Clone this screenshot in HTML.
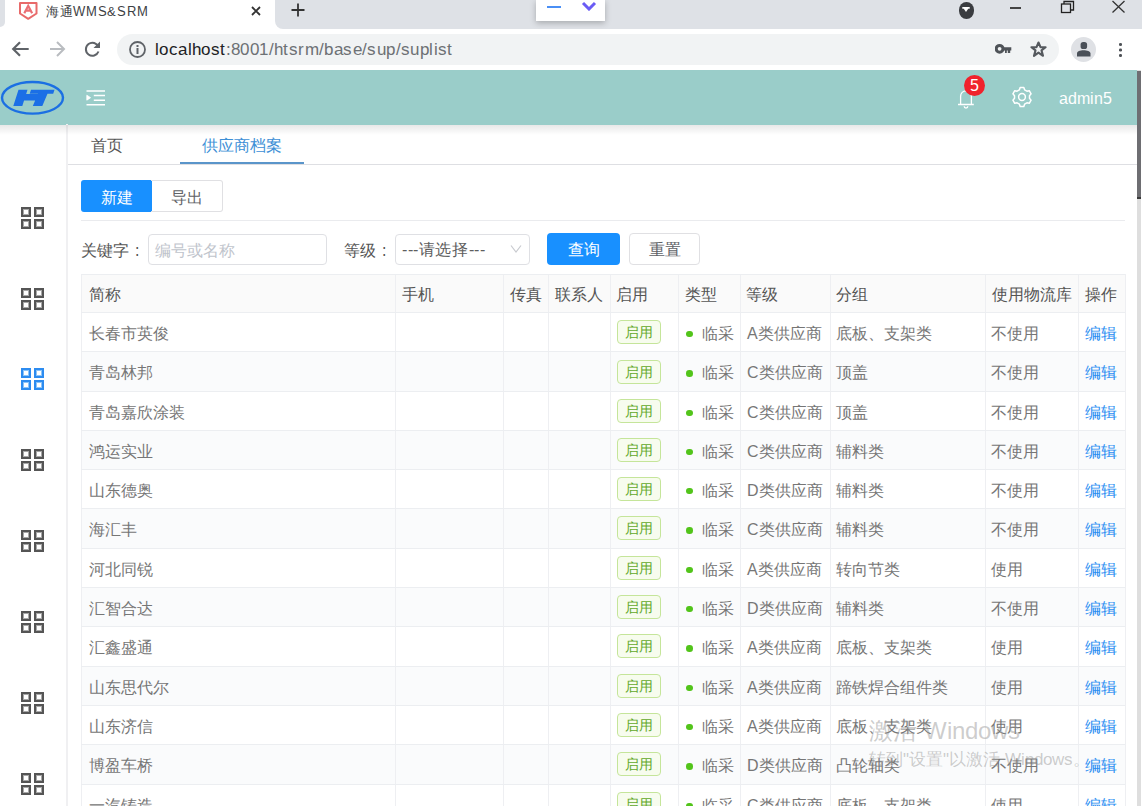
<!DOCTYPE html>
<html><head><meta charset="utf-8">
<style>
@font-face{font-family:"Liberation Sans";src:local("Liberation Sans"),local("LiberationSans"),local("LiberationSans-Regular")}
@font-face{font-family:"Liberation Sans";src:local("Liberation Mono"),local("LiberationMono"),local("LiberationMono-Regular");size-adjust:180%;unicode-range:U+2E80-9FFF,U+3000-303F,U+FF00-FFEF}
*{margin:0;padding:0;box-sizing:border-box}
html,body{width:1142px;height:807px;overflow:hidden;background:#fff;font-family:"Liberation Sans",sans-serif;position:relative}
.a{position:absolute}
.t{white-space:nowrap}
#tabbar{left:275px;top:0;width:867px;height:29px;background:#dee1e6;border-radius:0 0 0 8px}
#tab{left:0;top:0;width:275px;height:29px;background:#fff}
#toolbar{left:0;top:29px;width:1142px;height:41px;background:#fff}
#omni{left:117px;top:34px;width:942px;height:31px;background:#f1f3f4;border-radius:16px}
#hdr{left:0;top:70px;width:1137px;height:54.6px;background:#9acdc9}
#hshadow{z-index:2;left:0;top:124.6px;width:1137px;height:10px;background:linear-gradient(rgba(0,0,0,.09),rgba(0,0,0,0))}
#side{left:66px;top:124px;width:2px;height:683px;background:#f0f0f2}
#scroll{left:1137px;top:70px;width:4px;height:737px;background:#dedede}
#thumb{left:1137px;top:71px;width:4px;height:128px;background:#6e6e72;border-bottom:2px solid #3a3a3a}
.sq{border:2.5px solid #616161;width:10px;height:10px}
.grid{width:23px;height:23px}
.grid i{position:absolute;width:10px;height:10px;border:2px solid #555;box-shadow:inset 0 0 0 1px #a8a8a8}
.grid.on i{border-color:#2d8cf0;box-shadow:inset 0 0 0 1px #8cc4f8}
.thead{background:#fafafa}
.th{font-size:15.5px;color:#555}
.tr{left:81px;width:1044px}
.td{font-size:15.5px;color:#767676}
.edit{color:#2a8ef2}
.tag{width:44px;height:24px;border:1px solid #c5e59a;background:#f7fcee;border-radius:4px;color:#62a82a;font-size:14px;line-height:22px;text-align:center}
.dot{width:6.5px;height:6.5px;border-radius:50%;background:#52c41a}
.vl{width:1px;background:#eeeff2}
.hl{left:81px;width:1044px;height:1px;background:#eceef1}
.btn{font-size:16px;text-align:center}
</style></head><body>
<div id="tabbar" class="a"></div>
<div id="tab" class="a"></div>
<div class="a" style="left:0;top:0;width:5px;height:27px;background:#dee1e6;border-radius:0 0 6px 0"></div>
<!-- favicon -->
<svg class="a" style="left:14px;top:0" width="30" height="26" viewBox="0 0 30 26"><path d="M6 3H22.5V13.5L14.2 18.8L6 13.5Z" fill="none" stroke="#e86a6a" stroke-width="2" stroke-linejoin="round"/><path d="M10.3 13.2L14.2 5.8L18.1 13.2M11.6 10.6H16.8" fill="none" stroke="#ea6e74" stroke-width="2.2"/></svg>
<div class="a t" style="left:46px;top:3px;font-size:13px;letter-spacing:0.7px;color:#3c4043;line-height:18px">海通WMS&amp;SRM</div>
<svg class="a" style="left:251px;top:6px" width="10" height="10" viewBox="0 0 10 10"><path d="M1 1L9 9M9 1L1 9" stroke="#333" stroke-width="1.8"/></svg>
<svg class="a" style="left:291px;top:3px" width="14" height="14" viewBox="0 0 14 14"><path d="M7 0.5V13.5M0.5 7H13.5" stroke="#333" stroke-width="1.8"/></svg>
<!-- popup -->
<div class="a" style="left:536px;top:0;width:69px;height:21px;background:#fff;box-shadow:0 2px 6px rgba(0,0,0,.25)"></div>
<div class="a" style="left:547px;top:6px;width:14px;height:2px;background:#4a8ff5"></div>
<svg class="a" style="left:581px;top:1px" width="16" height="10" viewBox="0 0 16 10"><path d="M2 2L8 8L14 2" fill="none" stroke="#6a5cf5" stroke-width="3"/></svg>
<!-- window icons -->
<div class="a" style="left:958.5px;top:2px;width:15.5px;height:16.5px;border-radius:50%;background:#3a3c40"></div><svg class="a" style="left:962px;top:6px" width="8" height="7" viewBox="0 0 8 7"><path d="M0.3 1H7.7V2.8H0.3Z M1.8 2.8H6.2L4 6Z" fill="#fff"/></svg>
<div class="a" style="left:1010px;top:7px;width:11px;height:1.5px;background:#444"></div>
<svg class="a" style="left:1060px;top:0" width="16" height="14" viewBox="0 0 16 14"><rect x="1.5" y="4" width="9" height="8.5" fill="none" stroke="#222" stroke-width="1.3"/><path d="M4 4V1.5H13.5V10H10.5" fill="none" stroke="#222" stroke-width="1.3"/></svg>
<svg class="a" style="left:1111px;top:0" width="15" height="14" viewBox="0 0 15 14"><path d="M1.5 1L13.5 12.5M13.5 1L1.5 12.5" stroke="#333" stroke-width="1.3"/></svg>
<!-- toolbar -->
<div id="toolbar" class="a"></div>
<div id="omni" class="a"></div>
<svg class="a" style="left:10px;top:39px" width="20" height="20" viewBox="0 0 20 20"><path d="M18.7 10H3.5M10 3.2L3.2 10L10 16.8" fill="none" stroke="#5f6368" stroke-width="2.2"/></svg>
<svg class="a" style="left:47px;top:39px" width="20" height="20" viewBox="0 0 20 20"><path d="M3 10H16.5M10 3L17 10L10 17" fill="none" stroke="#b9bcc0" stroke-width="2"/></svg>
<svg class="a" style="left:83px;top:39px" width="20" height="20" viewBox="0 0 20 20"><path d="M15.5 8A6.5 6.5 0 1 0 15.5 12.5" fill="none" stroke="#5f6368" stroke-width="2"/><path d="M17 2.5V9H10.5Z" fill="#5f6368"/></svg>
<svg class="a" style="left:128px;top:40px" width="19" height="19" viewBox="0 0 19 19"><circle cx="9.5" cy="9.5" r="7.5" fill="none" stroke="#5f6368" stroke-width="1.8"/><rect x="8.5" y="8" width="2" height="6" fill="#5f6368"/><rect x="8.5" y="5" width="2" height="2" fill="#5f6368"/></svg>
<div class="a t" style="left:155px;top:39px;font-size:16.5px;line-height:20px;letter-spacing:0.4px;color:#6d7175"><span style="color:#202124">localhost</span>:8001/htsrm/base/sup/suplist</div>
<svg class="a" style="left:995px;top:43px" width="17" height="12" viewBox="0 0 17 12"><circle cx="4.6" cy="5.8" r="3.4" fill="none" stroke="#4f5358" stroke-width="3"/><path d="M7.5 4.2H16.3V7.6H15.2V10H12.8V7.6H11.8V10H10V7.6H7.5Z" fill="#4f5358"/></svg>
<svg class="a" style="left:1029px;top:40px" width="19" height="19" viewBox="0 0 19 19"><path d="M9.5 2.5L11.5 7.2H16.6L12.5 10.4L14 15.8L9.5 12.6L5 15.8L6.5 10.4L2.4 7.2H7.5Z" fill="none" stroke="#55595e" stroke-width="2.1" stroke-linejoin="round"/></svg>
<div class="a" style="left:1071px;top:37px;width:25px;height:25px;border-radius:50%;background:#dfe1e5"></div>
<svg class="a" style="left:1073px;top:39px" width="21" height="21" viewBox="0 0 21 21"><rect x="7.6" y="3" width="6.5" height="7" rx="2.6" fill="#4a5058"/><path d="M4 17.5V14.5C4 12.3 7 11.3 10.5 11.3S17.5 12.3 17.5 14.5V17.5Z" fill="#4a5058"/></svg>
<div class="a" style="left:1119px;top:43.3px;width:2.6px;height:2.6px;border-radius:50%;background:#4f5358;box-shadow:0 5.5px 0 #4f5358,0 11px 0 #4f5358"></div>
<!-- app header -->
<div id="hdr" class="a"></div>
<div id="hshadow" class="a"></div>
<svg class="a" style="left:0;top:80px" width="66" height="36" viewBox="0 0 66 36"><ellipse cx="32.5" cy="17.8" rx="30.5" ry="15.8" fill="none" stroke="#1b6fe3" stroke-width="2.4"/><path d="M18.5 9.8L27.5 9.8L22.3 26L13.3 26Z M25.5 14L39 14L37 20.5L23.5 20.5Z M31 9.8L54.5 9.8L53.2 13.8L29.7 13.8Z M38 13.8L47.5 13.8L42.3 26L32.8 26Z" fill="#1b6fe6"/></svg>
<svg class="a" style="left:86px;top:90px" width="19" height="16" viewBox="0 0 19 16"><path d="M0.5 1H19M7.8 5.5H19M7.8 10.2H19M0.5 14.8H19" stroke="#fff" stroke-width="1.5"/><path d="M0.8 5.2L4.6 7.7L0.8 10.2Z" fill="#fff" stroke="#fff" stroke-width="0.8" stroke-linejoin="round"/></svg>
<svg class="a" style="left:957px;top:89px" width="18" height="20" viewBox="0 0 18 20"><path d="M3.6 15.5V7.2A5.4 5.4 0 0 1 14.4 7.2V15.5M1 15.5H16.8M7.2 17.3A1.8 1.8 0 0 0 10.8 17.3" fill="none" stroke="#fff" stroke-width="1.3"/></svg>
<div class="a" style="left:963.5px;top:74.5px;width:21.5px;height:21.5px;border-radius:50%;background:#f0222c;color:#fff;font-size:16px;line-height:22px;text-align:center">5</div>
<svg class="a" style="left:1010px;top:85px" width="24" height="24" viewBox="0 0 24 24"><path d="M9.40 4.86 L10.17 2.58 L13.83 2.58 L14.60 4.86 L16.89 6.18 L19.25 5.70 L21.08 8.87 L19.48 10.68 L19.48 13.32 L21.08 15.13 L19.25 18.30 L16.89 17.82 L14.60 19.14 L13.83 21.42 L10.17 21.42 L9.40 19.14 L7.11 17.82 L4.75 18.30 L2.92 15.13 L4.52 13.32 L4.52 10.68 L2.92 8.87 L4.75 5.70 L7.11 6.18Z" fill="none" stroke="#fff" stroke-width="1.5" stroke-linejoin="round"/><circle cx="12" cy="12" r="3.4" fill="none" stroke="#fff" stroke-width="1.5"/></svg>
<div class="a t" style="left:1059px;top:89px;font-size:16px;line-height:20px;color:#fff">admin5</div>
<div id="scroll" class="a"></div>
<div id="thumb" class="a"></div>
<!-- sidebar -->
<div id="side" class="a"></div>
<div class="a grid" style="left:21px;top:207px"><i style="left:0;top:0"></i><i style="left:13px;top:0"></i><i style="left:0;top:12px"></i><i style="left:13px;top:12px"></i></div>
<div class="a grid" style="left:21px;top:288px"><i style="left:0;top:0"></i><i style="left:13px;top:0"></i><i style="left:0;top:12px"></i><i style="left:13px;top:12px"></i></div>
<div class="a grid on" style="left:21px;top:368px"><i style="left:0;top:0"></i><i style="left:13px;top:0"></i><i style="left:0;top:12px"></i><i style="left:13px;top:12px"></i></div>
<div class="a grid" style="left:21px;top:449px"><i style="left:0;top:0"></i><i style="left:13px;top:0"></i><i style="left:0;top:12px"></i><i style="left:13px;top:12px"></i></div>
<div class="a grid" style="left:21px;top:530px"><i style="left:0;top:0"></i><i style="left:13px;top:0"></i><i style="left:0;top:12px"></i><i style="left:13px;top:12px"></i></div>
<div class="a grid" style="left:21px;top:611px"><i style="left:0;top:0"></i><i style="left:13px;top:0"></i><i style="left:0;top:12px"></i><i style="left:13px;top:12px"></i></div>
<div class="a grid" style="left:21px;top:692px"><i style="left:0;top:0"></i><i style="left:13px;top:0"></i><i style="left:0;top:12px"></i><i style="left:13px;top:12px"></i></div>
<div class="a grid" style="left:21px;top:772.5px"><i style="left:0;top:0"></i><i style="left:13px;top:0"></i><i style="left:0;top:12px"></i><i style="left:13px;top:12px"></i></div>
<!-- tabs -->
<div class="a" style="left:68px;top:164px;width:1069px;height:1px;background:#dedfe3"></div>
<div class="a t" style="left:91px;top:136px;font-size:15.5px;line-height:20px;color:#555">首页</div>
<div class="a t" style="left:202px;top:136px;font-size:15.5px;line-height:20px;color:#3d8fd6">供应商档案</div>
<div class="a" style="left:180px;top:162px;width:124px;height:2px;background:#5a95ca"></div>
<!-- buttons -->
<div class="a btn t" style="left:81px;top:180px;width:71px;height:32px;line-height:36px;background:#1890ff;color:#fff;border-radius:3px 0 0 3px">新建</div>
<div class="a btn t" style="left:151px;top:180px;width:72px;height:32px;line-height:34px;border:1px solid #e0e0e3;border-left:none;color:#606266;border-radius:0 3px 3px 0">导出</div>
<div class="a" style="left:81px;top:220px;width:1044px;height:1px;background:#eaebee"></div>
<!-- search -->
<div class="a t" style="left:81px;top:240.5px;font-size:15.5px;line-height:20px;color:#555">关键字<span style="margin-left:5.5px">:</span></div>
<div class="a" style="left:148px;top:234px;width:179px;height:31px;border:1px solid #dfe0e4;border-radius:4px"></div>
<div class="a t" style="left:155px;top:240.5px;font-size:15.5px;line-height:20px;color:#c0c4cc">编号或名称</div>
<div class="a t" style="left:344px;top:240.5px;font-size:15.5px;line-height:20px;color:#555">等级<span style="margin-left:5.5px">:</span></div>
<div class="a" style="left:395px;top:234px;width:135px;height:31px;border:1px solid #dfe0e4;border-radius:4px"></div>
<div class="a t" style="left:402px;top:239.5px;font-size:15.5px;line-height:20px;letter-spacing:0.6px;color:#5e5e5e">---请选择---</div>
<svg class="a" style="left:510px;top:244px" width="12" height="10" viewBox="0 0 12 10"><path d="M1 1.5L6 8L11 1.5" fill="none" stroke="#c8cacf" stroke-width="1.2"/></svg>
<div class="a btn t" style="left:547px;top:233px;width:73px;height:32px;line-height:34px;background:#1890ff;color:#fff;border-radius:4px">查询</div>
<div class="a btn t" style="left:629px;top:233px;width:71px;height:32px;line-height:32px;border:1px solid #e0e0e3;color:#606266;border-radius:4px">重置</div>
<div class="a thead" style="left:81px;top:274px;width:1044px;height:38px"></div>
<div class="a th t" style="left:89px;top:276px;height:38px;line-height:38px">简称</div>
<div class="a th t" style="left:402px;top:276px;height:38px;line-height:38px">手机</div>
<div class="a th t" style="left:510px;top:276px;height:38px;line-height:38px">传真</div>
<div class="a th t" style="left:555px;top:276px;height:38px;line-height:38px">联系人</div>
<div class="a th t" style="left:616px;top:276px;height:38px;line-height:38px">启用</div>
<div class="a th t" style="left:685px;top:276px;height:38px;line-height:38px">类型</div>
<div class="a th t" style="left:746px;top:276px;height:38px;line-height:38px">等级</div>
<div class="a th t" style="left:836px;top:276px;height:38px;line-height:38px">分组</div>
<div class="a th t" style="left:992px;top:276px;height:38px;line-height:38px">使用物流库</div>
<div class="a th t" style="left:1085px;top:276px;height:38px;line-height:38px">操作</div>
<div class="a tr" style="top:312px;height:39px;background:#fff"></div>
<div class="a td t" style="left:89px;top:314px;height:39px;line-height:39px">长春市英俊</div>
<div class="a tag" style="left:617px;top:320px">启用</div>
<div class="a dot" style="left:686px;top:330.8px"></div>
<div class="a td t" style="left:702px;top:314px;height:39px;line-height:39px">临采</div>
<div class="a td t" style="left:747px;top:314px;height:39px;line-height:39px">A类供应商</div>
<div class="a td t" style="left:836px;top:314px;height:39px;line-height:39px">底板、支架类</div>
<div class="a td t" style="left:991px;top:314px;height:39px;line-height:39px">不使用</div>
<div class="a td edit t" style="left:1085px;top:314px;height:39px;line-height:39px">编辑</div>
<div class="a tr" style="top:351px;height:40px;background:#fafbfc"></div>
<div class="a td t" style="left:89px;top:353px;height:40px;line-height:40px">青岛林邦</div>
<div class="a tag" style="left:617px;top:360px">启用</div>
<div class="a dot" style="left:686px;top:370.3px"></div>
<div class="a td t" style="left:702px;top:353px;height:40px;line-height:40px">临采</div>
<div class="a td t" style="left:747px;top:353px;height:40px;line-height:40px">C类供应商</div>
<div class="a td t" style="left:836px;top:353px;height:40px;line-height:40px">顶盖</div>
<div class="a td t" style="left:991px;top:353px;height:40px;line-height:40px">不使用</div>
<div class="a td edit t" style="left:1085px;top:353px;height:40px;line-height:40px">编辑</div>
<div class="a tr" style="top:391px;height:39px;background:#fff"></div>
<div class="a td t" style="left:89px;top:393px;height:39px;line-height:39px">青岛嘉欣涂装</div>
<div class="a tag" style="left:617px;top:399px">启用</div>
<div class="a dot" style="left:686px;top:409.8px"></div>
<div class="a td t" style="left:702px;top:393px;height:39px;line-height:39px">临采</div>
<div class="a td t" style="left:747px;top:393px;height:39px;line-height:39px">C类供应商</div>
<div class="a td t" style="left:836px;top:393px;height:39px;line-height:39px">顶盖</div>
<div class="a td t" style="left:991px;top:393px;height:39px;line-height:39px">不使用</div>
<div class="a td edit t" style="left:1085px;top:393px;height:39px;line-height:39px">编辑</div>
<div class="a tr" style="top:430px;height:39px;background:#fafbfc"></div>
<div class="a td t" style="left:89px;top:432px;height:39px;line-height:39px">鸿运实业</div>
<div class="a tag" style="left:617px;top:438px">启用</div>
<div class="a dot" style="left:686px;top:448.8px"></div>
<div class="a td t" style="left:702px;top:432px;height:39px;line-height:39px">临采</div>
<div class="a td t" style="left:747px;top:432px;height:39px;line-height:39px">C类供应商</div>
<div class="a td t" style="left:836px;top:432px;height:39px;line-height:39px">辅料类</div>
<div class="a td t" style="left:991px;top:432px;height:39px;line-height:39px">不使用</div>
<div class="a td edit t" style="left:1085px;top:432px;height:39px;line-height:39px">编辑</div>
<div class="a tr" style="top:469px;height:39px;background:#fff"></div>
<div class="a td t" style="left:89px;top:471px;height:39px;line-height:39px">山东德奥</div>
<div class="a tag" style="left:617px;top:477px">启用</div>
<div class="a dot" style="left:686px;top:487.8px"></div>
<div class="a td t" style="left:702px;top:471px;height:39px;line-height:39px">临采</div>
<div class="a td t" style="left:747px;top:471px;height:39px;line-height:39px">D类供应商</div>
<div class="a td t" style="left:836px;top:471px;height:39px;line-height:39px">辅料类</div>
<div class="a td t" style="left:991px;top:471px;height:39px;line-height:39px">不使用</div>
<div class="a td edit t" style="left:1085px;top:471px;height:39px;line-height:39px">编辑</div>
<div class="a tr" style="top:508px;height:40px;background:#fafbfc"></div>
<div class="a td t" style="left:89px;top:510px;height:40px;line-height:40px">海汇丰</div>
<div class="a tag" style="left:617px;top:516px">启用</div>
<div class="a dot" style="left:686px;top:527.3px"></div>
<div class="a td t" style="left:702px;top:510px;height:40px;line-height:40px">临采</div>
<div class="a td t" style="left:747px;top:510px;height:40px;line-height:40px">C类供应商</div>
<div class="a td t" style="left:836px;top:510px;height:40px;line-height:40px">辅料类</div>
<div class="a td t" style="left:991px;top:510px;height:40px;line-height:40px">不使用</div>
<div class="a td edit t" style="left:1085px;top:510px;height:40px;line-height:40px">编辑</div>
<div class="a tr" style="top:548px;height:39px;background:#fff"></div>
<div class="a td t" style="left:89px;top:550px;height:39px;line-height:39px">河北同锐</div>
<div class="a tag" style="left:617px;top:556px">启用</div>
<div class="a dot" style="left:686px;top:566.8px"></div>
<div class="a td t" style="left:702px;top:550px;height:39px;line-height:39px">临采</div>
<div class="a td t" style="left:747px;top:550px;height:39px;line-height:39px">A类供应商</div>
<div class="a td t" style="left:836px;top:550px;height:39px;line-height:39px">转向节类</div>
<div class="a td t" style="left:991px;top:550px;height:39px;line-height:39px">使用</div>
<div class="a td edit t" style="left:1085px;top:550px;height:39px;line-height:39px">编辑</div>
<div class="a tr" style="top:587px;height:39px;background:#fafbfc"></div>
<div class="a td t" style="left:89px;top:589px;height:39px;line-height:39px">汇智合达</div>
<div class="a tag" style="left:617px;top:595px">启用</div>
<div class="a dot" style="left:686px;top:605.8px"></div>
<div class="a td t" style="left:702px;top:589px;height:39px;line-height:39px">临采</div>
<div class="a td t" style="left:747px;top:589px;height:39px;line-height:39px">D类供应商</div>
<div class="a td t" style="left:836px;top:589px;height:39px;line-height:39px">辅料类</div>
<div class="a td t" style="left:991px;top:589px;height:39px;line-height:39px">不使用</div>
<div class="a td edit t" style="left:1085px;top:589px;height:39px;line-height:39px">编辑</div>
<div class="a tr" style="top:626px;height:40px;background:#fff"></div>
<div class="a td t" style="left:89px;top:628px;height:40px;line-height:40px">汇鑫盛通</div>
<div class="a tag" style="left:617px;top:634px">启用</div>
<div class="a dot" style="left:686px;top:645.3px"></div>
<div class="a td t" style="left:702px;top:628px;height:40px;line-height:40px">临采</div>
<div class="a td t" style="left:747px;top:628px;height:40px;line-height:40px">A类供应商</div>
<div class="a td t" style="left:836px;top:628px;height:40px;line-height:40px">底板、支架类</div>
<div class="a td t" style="left:991px;top:628px;height:40px;line-height:40px">使用</div>
<div class="a td edit t" style="left:1085px;top:628px;height:40px;line-height:40px">编辑</div>
<div class="a tr" style="top:666px;height:39px;background:#fafbfc"></div>
<div class="a td t" style="left:89px;top:668px;height:39px;line-height:39px">山东思代尔</div>
<div class="a tag" style="left:617px;top:674px">启用</div>
<div class="a dot" style="left:686px;top:684.8px"></div>
<div class="a td t" style="left:702px;top:668px;height:39px;line-height:39px">临采</div>
<div class="a td t" style="left:747px;top:668px;height:39px;line-height:39px">A类供应商</div>
<div class="a td t" style="left:836px;top:668px;height:39px;line-height:39px">蹄铁焊合组件类</div>
<div class="a td t" style="left:991px;top:668px;height:39px;line-height:39px">使用</div>
<div class="a td edit t" style="left:1085px;top:668px;height:39px;line-height:39px">编辑</div>
<div class="a tr" style="top:705px;height:39px;background:#fff"></div>
<div class="a td t" style="left:89px;top:707px;height:39px;line-height:39px">山东济信</div>
<div class="a tag" style="left:617px;top:713px">启用</div>
<div class="a dot" style="left:686px;top:723.8px"></div>
<div class="a td t" style="left:702px;top:707px;height:39px;line-height:39px">临采</div>
<div class="a td t" style="left:747px;top:707px;height:39px;line-height:39px">A类供应商</div>
<div class="a td t" style="left:836px;top:707px;height:39px;line-height:39px">底板、支架类</div>
<div class="a td t" style="left:991px;top:707px;height:39px;line-height:39px">使用</div>
<div class="a td edit t" style="left:1085px;top:707px;height:39px;line-height:39px">编辑</div>
<div class="a tr" style="top:744px;height:40px;background:#fafbfc"></div>
<div class="a td t" style="left:89px;top:746px;height:40px;line-height:40px">博盈车桥</div>
<div class="a tag" style="left:617px;top:752px">启用</div>
<div class="a dot" style="left:686px;top:763.3px"></div>
<div class="a td t" style="left:702px;top:746px;height:40px;line-height:40px">临采</div>
<div class="a td t" style="left:747px;top:746px;height:40px;line-height:40px">D类供应商</div>
<div class="a td t" style="left:836px;top:746px;height:40px;line-height:40px">凸轮轴类</div>
<div class="a td t" style="left:991px;top:746px;height:40px;line-height:40px">不使用</div>
<div class="a td edit t" style="left:1085px;top:746px;height:40px;line-height:40px">编辑</div>
<div class="a tr" style="top:784px;height:39px;background:#fff"></div>
<div class="a td t" style="left:89px;top:786px;height:39px;line-height:39px">一汽铸造</div>
<div class="a tag" style="left:617px;top:792px">启用</div>
<div class="a dot" style="left:686px;top:802.8px"></div>
<div class="a td t" style="left:702px;top:786px;height:39px;line-height:39px">临采</div>
<div class="a td t" style="left:747px;top:786px;height:39px;line-height:39px">C类供应商</div>
<div class="a td t" style="left:836px;top:786px;height:39px;line-height:39px">底板、支架类</div>
<div class="a td t" style="left:991px;top:786px;height:39px;line-height:39px">使用</div>
<div class="a td edit t" style="left:1085px;top:786px;height:39px;line-height:39px">编辑</div>
<div class="a vl" style="left:81px;top:274px;height:533px"></div>
<div class="a vl" style="left:395px;top:274px;height:533px"></div>
<div class="a vl" style="left:503px;top:274px;height:533px"></div>
<div class="a vl" style="left:548px;top:274px;height:533px"></div>
<div class="a vl" style="left:610px;top:274px;height:533px"></div>
<div class="a vl" style="left:678px;top:274px;height:533px"></div>
<div class="a vl" style="left:740px;top:274px;height:533px"></div>
<div class="a vl" style="left:830px;top:274px;height:533px"></div>
<div class="a vl" style="left:985px;top:274px;height:533px"></div>
<div class="a vl" style="left:1078px;top:274px;height:533px"></div>
<div class="a vl" style="left:1125px;top:274px;height:533px"></div>
<div class="a hl" style="top:274px"></div>
<div class="a hl" style="top:312px"></div>
<div class="a hl" style="top:351px"></div>
<div class="a hl" style="top:391px"></div>
<div class="a hl" style="top:430px"></div>
<div class="a hl" style="top:469px"></div>
<div class="a hl" style="top:508px"></div>
<div class="a hl" style="top:548px"></div>
<div class="a hl" style="top:587px"></div>
<div class="a hl" style="top:626px"></div>
<div class="a hl" style="top:666px"></div>
<div class="a hl" style="top:705px"></div>
<div class="a hl" style="top:744px"></div>
<div class="a hl" style="top:784px"></div>
<div class="a hl" style="top:823px"></div>
<div class="a t" style="left:869px;top:716px;font-size:24px;line-height:30px;color:rgba(150,150,150,.48)">激活 Windows</div>
<div class="a t" style="left:869px;top:747.5px;font-size:16.5px;line-height:22px;color:rgba(150,150,150,.48)">转到"设置"以激活 Windows。</div>
<div class="a" id="bottomstrip" style="left:0;top:806px;width:1142px;height:1px;background:#fff"></div>
</body></html>
